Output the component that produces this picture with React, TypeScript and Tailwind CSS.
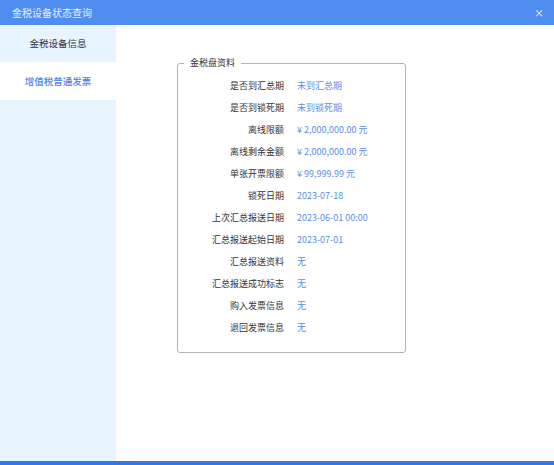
import React from "react";

const rows: [string, string][] = [
  ["是否到汇总期", "未到汇总期"],
  ["是否到锁死期", "未到锁死期"],
  ["离线限额", "¥ 2,000,000.00 元"],
  ["离线剩余金额", "¥ 2,000,000.00 元"],
  ["单张开票限额", "¥ 99,999.99 元"],
  ["锁死日期", "2023-07-18"],
  ["上次汇总报送日期", "2023-06-01 00:00"],
  ["汇总报送起始日期", "2023-07-01"],
  ["汇总报送资料", "无"],
  ["汇总报送成功标志", "无"],
  ["购入发票信息", "无"],
  ["退回发票信息", "无"],
];

const App: React.FC = () => {
  return (
    <div
      className="w-[554px] h-[465px] flex flex-col overflow-hidden bg-white"
      style={{ fontFamily: '"Noto Sans CJK SC", "Noto Sans", sans-serif' }}
    >
      {/* title bar */}
      <div className="h-[25px] flex items-center bg-[#4f8ef0] text-[#e6eefc]">
        <span className="pl-[12px] text-[10px] leading-none">金税设备状态查询</span>
        <div className="ml-auto w-[30px] h-full flex items-center justify-center text-[10px] text-white">
          ×
        </div>
      </div>

      <div className="flex-1 flex min-h-0">
        {/* side menu */}
        <div className="w-[116px] bg-[#e8f4ff] flex flex-col">
          <div className="h-[37px] flex items-center justify-center text-[9.5px] text-[#333]">
            金税设备信息
          </div>
          <div className="h-[38px] flex items-center justify-center bg-white text-[9.5px] font-medium text-[#4a86e8]">
            增值税普通发票
          </div>
        </div>

        {/* content */}
        <div className="flex-1 pl-[61px] pt-[32px]">
          <fieldset className="w-[229px] border border-[#b4b4b4] rounded-[3px] p-0 pb-[13px]">
            <legend className="ml-[6px] px-[6px] text-[9px] leading-[12px] text-[#333]">
              金税盘资料
            </legend>
            <div className="pt-[6px] grid grid-cols-[106px_1fr] gap-x-[13px]">
              {rows.map(([label, value]) => (
                <React.Fragment key={label}>
                  <div className="h-[22px] flex items-center justify-end text-[9px] text-[#333]">
                    {label}
                  </div>
                  <div className="h-[22px] flex items-center text-[9px] text-[#5b8ee6]">
                    {value}
                  </div>
                </React.Fragment>
              ))}
            </div>
          </fieldset>
        </div>
      </div>

      {/* bottom bar */}
      <div className="h-[4px] bg-[#3079e0]" />
    </div>
  );
};

export default App;
